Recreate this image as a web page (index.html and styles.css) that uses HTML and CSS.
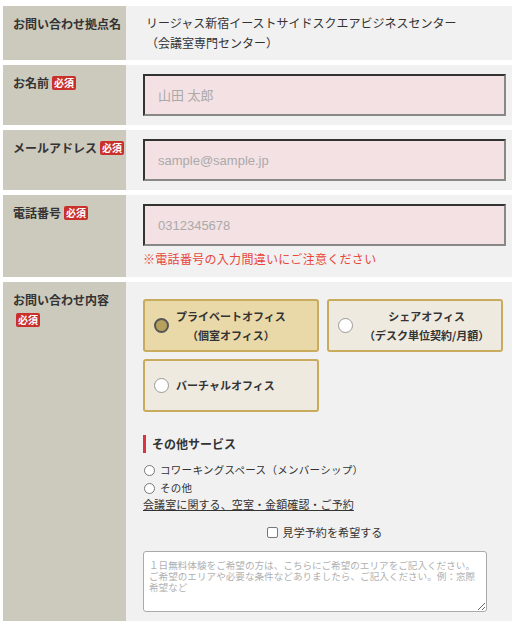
FILE: index.html
```html
<!DOCTYPE html>
<html>
    <head>
        <title>お問い合わせ</title>
        <link rel="stylesheet" href="styles.css">
    </head>
    <body>
        <div class="form">
            <div class="row">
                <div class="label">お問い合わせ拠点名</div>
                <div class="field place">リージャス新宿イーストサイドスクエアビジネスセンター<br>（会議室専門センター）</div>
            </div>
            <div class="row">
                <div class="label">お名前<span class="req">必須</span></div>
                <div class="field">
                    <input type="text" placeholder="山田 太郎">
                </div>
            </div>
            <div class="row">
                <div class="label">メールアドレス<span class="req">必須</span></div>
                <div class="field">
                    <input type="text" placeholder="sample@sample.jp">
                </div>
            </div>
            <div class="row">
                <div class="label">電話番号<span class="req">必須</span></div>
                <div class="field">
                    <input type="text" placeholder="0312345678">
                    <p class="note">※電話番号の入力間違いにご注意ください</p>
                </div>
            </div>
            <div class="row">
                <div class="label">お問い合わせ内容<span class="req">必須</span></div>
                <div class="field">
                    <div class="options">
                        <div class="opt on"><span class="dot"></span><span class="opt-text">プライベートオフィス<br>（個室オフィス）</span></div>
                        <div class="opt"><span class="dot"></span><span class="opt-text wide">シェアオフィス<br>（デスク単位契約/月額）</span></div>
                        <div class="opt"><span class="dot"></span><span class="opt-text">バーチャルオフィス</span></div>
                    </div>
                    <h3 class="sub-title">その他サービス</h3>
                    <div class="others">
                        <div class="radio-line"><span class="small-dot"></span>コワーキングスペース（メンバーシップ）</div>
                        <div class="radio-line"><span class="small-dot"></span>その他</div>
                        <a class="link" href="#">会議室に関する、空室・金額確認・ご予約</a>
                    </div>
                    <div class="visit"><span class="check"></span>見学予約を希望する</div>
                    <textarea placeholder="１日無料体験をご希望の方は、こちらにご希望のエリアをご記入ください。ご希望のエリアや必要な条件などありましたら、ご記入ください。例：窓際希望など"></textarea>
                </div>
            </div>
        </div>
    </body>
</html>
```

FILE: styles.css
```css
* {
    box-sizing: border-box;
}

body {
    margin: 0;
    font-family: "Noto Sans CJK JP", sans-serif;
    color: #333;
    background-color: #fff;
}

.form {
    width: 509px;
    margin: 6px 0 0 3px;
}

.row {
    display: flex;
    margin-bottom: 5px;
}

.label {
    width: 123px;
    flex-shrink: 0;
    background-color: #ccc9bd;
    padding: 8px 0 0 10px;
    font-size: 12px;
    font-weight: bold;
    line-height: 20px;
}

.req {
    display: inline-block;
    margin-left: 3px;
    padding: 0 2px;
    background-color: #c9302a;
    color: #fff;
    font-size: 10px;
    line-height: 14px;
    border-radius: 2px;
    vertical-align: 1px;
}

.field {
    flex: 1;
    background-color: #f1f1f1;
    padding: 9px 6px 9px 17px;
}

.field.place {
    padding: 7px 6px 7px 20px;
    font-size: 12px;
    line-height: 20px;
}

input[type=text] {
    display: block;
    width: 100%;
    height: 42px;
    padding: 0 13px;
    border: 2px solid;
    border-color: #333 #888 #888 #333;
    background-color: #f4e1e3;
    font-family: "Liberation Sans", "Noto Sans CJK JP", sans-serif;
    font-size: 13px;
}

input::placeholder {
    color: #aaa;
}

.note {
    margin: 4px 0 0 0;
    color: #e8463b;
    font-size: 12px;
    line-height: 18px;
    letter-spacing: 0.3px;
}

.options {
    display: grid;
    grid-template-columns: 176px 176px;
    gap: 7px 8px;
    margin-top: 8px;
}

.opt {
    display: flex;
    align-items: center;
    height: 53px;
    padding-left: 9px;
    border: 2px solid #c9ab5e;
    border-radius: 3px;
    background-color: #eeeae0;
    font-size: 11px;
    font-weight: bold;
    line-height: 19px;
}

.opt.on {
    background-color: #e9d9a9;
}

.dot {
    width: 15px;
    height: 15px;
    flex-shrink: 0;
    border: 1px solid #999;
    border-radius: 50%;
    background-color: #fff;
}

.opt.on .dot {
    border: 2px solid #555;
    background-color: #b5a05d;
}

.opt-text {
    margin-left: 7px;
    text-align: center;
}

.opt-text.wide {
    margin-left: 11px;
}

.sub-title {
    margin: 23px 0 0 0;
    padding-left: 6px;
    border-left: 3px solid #d9343f;
    font-size: 12px;
    line-height: 18px;
}

.others {
    margin-top: 8px;
    font-size: 10.5px;
    line-height: 18px;
    letter-spacing: 0.3px;
}

.radio-line {
    display: flex;
    align-items: center;
}

.small-dot {
    width: 11px;
    height: 11px;
    margin: 0 5px 0 1px;
    border: 1px solid #777;
    border-radius: 50%;
    background-color: #fff;
}

.link {
    display: block;
    color: #333;
    font-size: 11px;
    line-height: 14px;
    letter-spacing: 0.1px;
}

.visit {
    display: flex;
    align-items: center;
    justify-content: center;
    margin-top: 12px;
    font-size: 11px;
    line-height: 18px;
    letter-spacing: 0.1px;
}

.check {
    width: 11px;
    height: 11px;
    margin-right: 5px;
    border: 1px solid #777;
    border-radius: 2px;
    background-color: #fff;
}

textarea {
    display: block;
    width: 344px;
    height: 61px;
    margin-top: 10px;
    padding: 8px 5px;
    border: 1px solid #aaa;
    border-radius: 3px;
    background-color: #fff;
    font-family: "Noto Sans CJK JP", sans-serif;
    font-size: 9.6px;
    line-height: 11px;
}

textarea::placeholder {
    color: #b0b0b0;
}
```
